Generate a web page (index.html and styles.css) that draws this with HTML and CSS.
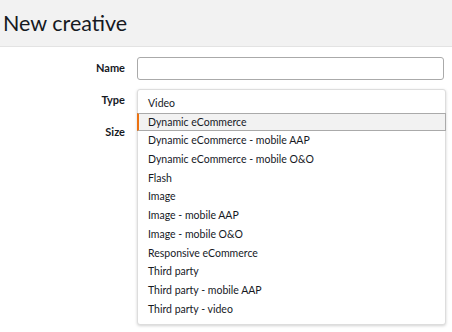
FILE: index.html
```html
<!DOCTYPE html>
<html lang="en">
<head>
    <meta charset="UTF-8">
    <title>New creative</title>
    <link rel="stylesheet" href="styles.css">
</head>
<body>
    <div class="page-header">
        <h1>New creative</h1>
    </div>

    <form class="creative-form">
        <label class="form-label" for="name">Name</label>
        <div class="form-field">
            <input class="text-input" id="name" type="text">
        </div>

        <label class="form-label">Type</label>
        <div class="form-field select-field">
            <div class="select-box"></div>
            <ul class="select-menu">
                <li>Video</li>
                <li class="active">Dynamic eCommerce</li>
                <li>Dynamic eCommerce - mobile AAP</li>
                <li>Dynamic eCommerce - mobile O&amp;O</li>
                <li>Flash</li>
                <li>Image</li>
                <li>Image - mobile AAP</li>
                <li>Image - mobile O&amp;O</li>
                <li>Responsive eCommerce</li>
                <li>Third party</li>
                <li>Third party - mobile AAP</li>
                <li>Third party - video</li>
            </ul>
        </div>

        <label class="form-label">Size</label>
        <div class="form-field">
            <div class="select-box"></div>
        </div>
    </form>
</body>
</html>
```

FILE: styles.css
```css
html, body {
    min-height: 332px;
}
body {
    margin: 0;
    font-family: Lato, Arial, sans-serif;
    color: #16191f;
    background: #fff;
}
.page-header {
    height: 46px;
    display: flex;
    align-items: center;
    padding-left: 3px;
    background: #f2f2f2;
    border-bottom: 1px solid #e3e3e3;
}
.page-header h1 {
    margin: 0;
    font-size: 21.5px;
    font-weight: 400;
}
.creative-form {
    display: grid;
    grid-template-columns: 125px 1fr;
    column-gap: 12px;
    row-gap: 9px;
    padding: 10px 8px 0 0;
}
.form-label {
    font-size: 11px;
    font-weight: 700;
    text-align: right;
    align-self: center;
    margin-top: -2px;
}
.form-field {
    position: relative;
}
.text-input {
    display: block;
    box-sizing: border-box;
    width: 100%;
    height: 23px;
    border: 1px solid #aaa;
    border-radius: 3px;
}
.select-box {
    height: 23px;
}
.select-menu {
    position: absolute;
    top: 0;
    left: 0;
    right: -2px;
    z-index: 1;
    margin: 0;
    padding: 4px 0 6px;
    list-style: none;
    background: #fff;
    border: 1px solid #ddd;
    border-radius: 3px;
    box-shadow: 0 1px 3px rgba(0,0,0,0.18);
    font-size: 10.5px;
}
.select-menu li {
    height: 18.7px;
    line-height: 18.7px;
    padding-left: 10px;
    box-sizing: border-box;
}
.select-menu li.active {
    background: #f2f2f2;
    border: 1px solid #aaa;
    border-left: 2px solid #ec7211;
    padding-left: 9px;
    line-height: 16.7px;
    margin: 0 -1px;
}
```
